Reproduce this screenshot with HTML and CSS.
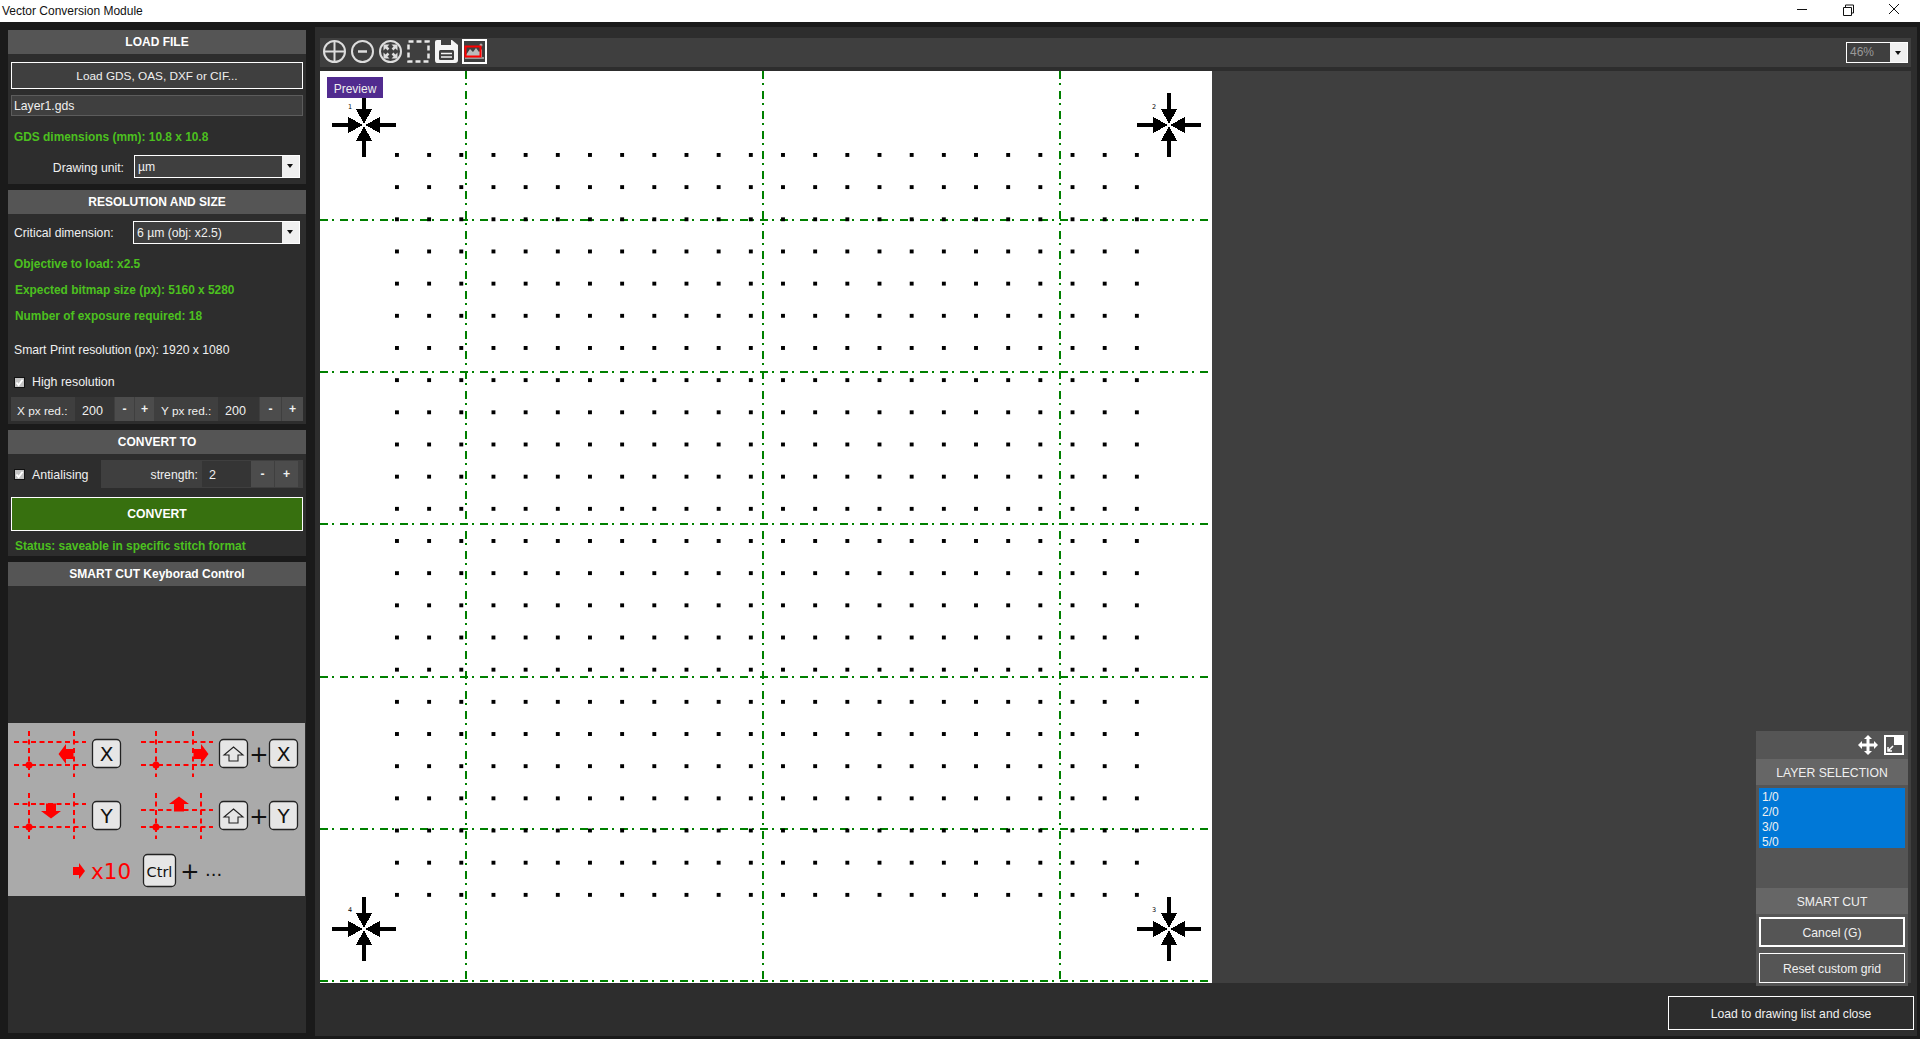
FILE: index.html
```html
<!DOCTYPE html>
<html lang="en">
<head>
    <meta charset="UTF-8">
    <meta name="viewport" content="width=device-width, initial-scale=1.0">
    <title>Vector Conversion Module</title>
    <link rel="stylesheet" href="styles.css">
</head>
<body>
    <svg class="defs" width="0" height="0">
        <defs>
            <symbol id="check" viewBox="0 0 11 11">
                <rect x="0.5" y="0.5" width="10" height="10" fill="#c4c4c4" stroke="#111"/>
                <path d="M2.5 5.5 L4.6 8 L8.6 2.8" fill="none" stroke="#fff" stroke-width="1.8"/>
            </symbol>
            <g id="arrow">
                <path d="M-2 -32 H2 V-16 H8 L0 -1 L-8 -16 H-2 Z" fill="#000"/>
            </g>
            <g id="target" shape-rendering="crispEdges">
                <use href="#arrow"/>
                <use href="#arrow" transform="rotate(90)"/>
                <use href="#arrow" transform="rotate(180)"/>
                <use href="#arrow" transform="rotate(270)"/>
            </g>
            <g id="redarrow">
                <path d="M0 -7.5 L-10 0 H-5 V7.5 H5 V0 H10 Z" fill="#f00"/>
            </g>
            <g id="shiftkey">
                <rect x="0.5" y="0.5" width="28" height="28" rx="4" fill="#e6e6e6" stroke="#222" stroke-width="1.3"/>
                <path d="M14.5 8 L24 16 H19 V22 H10 V16 H5 Z" fill="none" stroke="#222" stroke-width="1.1"/>
            </g>
            <g id="blankkey">
                <rect x="0.5" y="0.5" width="28" height="28" rx="4" fill="#e6e6e6" stroke="#222" stroke-width="1.3"/>
            </g>
        </defs>
    </svg>

    <header class="titlebar">
        <span class="title">Vector Conversion Module</span>
        <div class="winctl">
            <svg width="46" height="22" viewBox="0 0 46 22"><path d="M18 9.5 H28" stroke="#111"/></svg>
            <svg width="46" height="22" viewBox="0 0 46 22"><path d="M18.5 7.5 H26.5 V15.5 H18.5 Z M20.5 7 V5 H28.5 V13 H26.5" fill="none" stroke="#111"/></svg>
            <svg width="46" height="22" viewBox="0 0 46 22"><path d="M18 4 L28 14 M28 4 L18 14" stroke="#111"/></svg>
        </div>
    </header>

    <div class="app">
        <aside class="sidebar">
            <section class="panel">
                <h2 class="panel-head">LOAD FILE</h2>
                <button class="btn load-gds m8">Load GDS, OAS, DXF or CIF...</button>
                <div class="filename m6">Layer1.gds</div>
                <div class="info m10 h22">GDS dimensions (mm): 10.8 x 10.8</div>
                <div class="row unit-row m7">
                    <label class="unit-label">Drawing unit:</label>
                    <div class="select unit-select"><span class="select-val">µm</span><span class="select-btn"></span></div>
                </div>
            </section>

            <section class="panel">
                <h2 class="panel-head">RESOLUTION AND SIZE</h2>
                <div class="row cd-row m7">
                    <label>Critical dimension:</label>
                    <div class="select cd-select"><span class="select-val">6 µm (obj: x2.5)</span><span class="select-btn"></span></div>
                </div>
                <div class="info m10">Objective to load: x2.5</div>
                <div class="info m6 in1">Expected bitmap size (px): 5160 x 5280</div>
                <div class="info m6 in1">Number of exposure required: 18</div>
                <div class="plain m14">Smart Print resolution (px): 1920 x 1080</div>
                <label class="plain checkline m12"><svg class="check"><use href="#check"/></svg>High resolution</label>
                <div class="stepper-row m5">
                    <span class="step-label">X px red.:</span>
                    <span class="step-val xval">200</span>
                    <span class="step-btn">-</span>
                    <span class="step-btn">+</span>
                    <span class="step-label ylabel">Y px red.:</span>
                    <span class="step-val yval">200</span>
                    <span class="step-btn wide">-</span>
                    <span class="step-btn wide">+</span>
                </div>
            </section>

            <section class="panel">
                <h2 class="panel-head">CONVERT TO</h2>
                <div class="row aa-row m6">
                    <label class="plain checkline aa-check"><svg class="check"><use href="#check"/></svg>Antialising</label>
                    <div class="strength">
                        <span class="strength-label">strength:</span>
                        <span class="strength-val">2</span>
                        <span class="step-btn big">-</span>
                        <span class="step-btn big">+</span>
                    </div>
                </div>
                <button class="btn convert m9">CONVERT</button>
                <div class="info m5 in1">Status: saveable in specific stitch format</div>
            </section>

            <section class="panel grow">
                <h2 class="panel-head">SMART CUT Keyborad Control</h2>
                <svg class="keys" width="297" height="173" viewBox="8 723 297 173">
                    <rect x="8" y="723" width="297" height="173" fill="#aaa"/>

                    <g fill="none" stroke="#f00" stroke-width="2" stroke-dasharray="5 3.5">
                        <path d="M14 742 H86 M14 765 H86 M29 731 V777 M74 731 V777"/>
                        <path d="M141 742 H213 M141 765 H213 M156 731 V777 M193 731 V777"/>
                        <path d="M14 804 H86 M14 827 H86 M29 793 V839 M74 793 V839"/>
                        <path d="M141 810 H213 M141 827 H213 M156 793 V839 M201 793 V839"/>
                    </g>
                    <g fill="#f00">
                        <circle cx="29" cy="765" r="3.5"/>
                        <circle cx="156" cy="765" r="3.5"/>
                        <circle cx="29" cy="827" r="3.5"/>
                        <circle cx="156" cy="827" r="3.5"/>
                    </g>
                    <use href="#redarrow" transform="translate(66 754) rotate(-90)"/>
                    <use href="#redarrow" transform="translate(201 754) rotate(90)"/>
                    <use href="#redarrow" transform="translate(51 811) rotate(180)"/>
                    <use href="#redarrow" transform="translate(179 804)"/>

                    <use href="#blankkey" x="92" y="739"/>
                    <use href="#shiftkey" x="219" y="739"/>
                    <use href="#blankkey" x="269" y="739"/>
                    <use href="#blankkey" x="92" y="801"/>
                    <use href="#shiftkey" x="219" y="801"/>
                    <use href="#blankkey" x="269" y="801"/>

                    <g class="keytext">
                        <text x="106.5" y="761">X</text>
                        <text x="283.5" y="761">X</text>
                        <text x="106.5" y="823">Y</text>
                        <text x="283.5" y="823">Y</text>
                    </g>
                    <g class="keytext plus">
                        <text x="259" y="762">+</text>
                        <text x="259" y="824">+</text>
                        <text x="190" y="879">+</text>
                    </g>

                    <use href="#redarrow" transform="translate(79 871) rotate(90) scale(0.8)"/>
                    <text class="x10" x="91" y="879">x10</text>
                    <rect x="143.5" y="854.5" width="32" height="32" rx="4" fill="#e6e6e6" stroke="#222" stroke-width="1.3"/>
                    <text class="ctrl" x="159.5" y="877">Ctrl</text>
                    <text class="dots" x="205" y="876">...</text>
                </svg>
            </section>
        </aside>

        <main class="main">
            <div class="toolbar">
                <svg class="tool" viewBox="0 0 25 25"><g fill="none" stroke="#ddd" stroke-width="2"><circle cx="12.5" cy="12.5" r="10.5"/><path d="M12.5 3 V22 M3 12.5 H22"/></g></svg>
                <svg class="tool" viewBox="0 0 25 25"><g fill="none" stroke="#ddd" stroke-width="2"><circle cx="12.5" cy="12.5" r="10.5"/><path d="M8 12.5 H17" stroke-width="2.5"/></g></svg>
                <svg class="tool" viewBox="0 0 25 25"><circle cx="12.5" cy="12.5" r="10.5" fill="none" stroke="#ddd" stroke-width="2"/><g fill="#ddd"><path d="M5.5 5.5 H11.5 L5.5 11.5 Z"/><path d="M19.5 5.5 V11.5 L13.5 5.5 Z"/><path d="M19.5 19.5 H13.5 L19.5 13.5 Z"/><path d="M5.5 19.5 V13.5 L11.5 19.5 Z"/></g><path d="M7.5 7.5 L10.5 10.5 M17.5 7.5 L14.5 10.5 M17.5 17.5 L14.5 14.5 M7.5 17.5 L10.5 14.5" stroke="#ddd" stroke-width="2.5"/></svg>
                <svg class="tool" viewBox="0 0 25 25"><rect x="2.5" y="2.5" width="20" height="20" fill="none" stroke="#e8e8e8" stroke-width="2.5" stroke-dasharray="5 3"/></svg>
                <svg class="tool" viewBox="0 0 25 25"><path d="M3 1 H18 L24 6 V21 Q24 24 21 24 H3 Q1 24 1 21 V3 Q1 1 3 1 Z" fill="#f4f4f4"/><rect x="7" y="1" width="10" height="5" fill="#3f3f3f"/><rect x="5" y="11" width="15" height="10" rx="1.5" fill="#3f3f3f"/><path d="M7 14.5 H18 M7 18 H18" stroke="#f4f4f4" stroke-width="1.5"/></svg>
                <svg class="tool" viewBox="0 0 25 25"><rect x="1" y="1" width="23" height="23" fill="#3f3f3f" stroke="#fff" stroke-width="2"/><path d="M3 20 H22 V18 H3 Z" fill="#999"/><path d="M4 16 L8 10 L11 13 L14 9 L17 13 L20 10 V18 H4 Z" fill="#bbb"/><circle cx="19" cy="6" r="1.5" fill="#aaa"/><rect x="3.5" y="7.5" width="15" height="10" fill="none" stroke="#f00" stroke-width="2"/></svg>
                <div class="select zoom-select"><span class="select-val zoom-val">46%</span><span class="select-btn"></span></div>
            </div>

            <div class="stage">
                <svg class="canvas" width="892" height="912" viewBox="0 0 892 912">
                    <defs>
                        <pattern id="dots" x="75" y="82" width="32.17" height="32.17" patternUnits="userSpaceOnUse">
                            <rect width="4" height="4" fill="#000" shape-rendering="crispEdges"/>
                        </pattern>
                    </defs>
                    <rect width="892" height="912" fill="#fff"/>
                    <g class="stitch">
                        <path d="M146 0 V910"/>
                        <path d="M443 0 V910"/>
                        <path d="M740 0 V910"/>
                        <path d="M0 149 H892"/>
                        <path d="M0 301 H892"/>
                        <path d="M0 453 H892"/>
                        <path d="M0 606 H892"/>
                        <path d="M0 758 H892"/>
                        <path d="M0 910 H892"/>
                    </g>
                    <rect x="75" y="82" width="772" height="772" fill="url(#dots)"/>
                    <use href="#target" transform="translate(44 54)"/>
                    <use href="#target" transform="translate(849 54)"/>
                    <use href="#target" transform="translate(849 858)"/>
                    <use href="#target" transform="translate(44 858)"/>
                    <g class="marknum">
                        <text x="28" y="38">1</text>
                        <text x="832" y="38">2</text>
                        <text x="832" y="841">3</text>
                        <text x="28" y="841">4</text>
                    </g>
                </svg>
                <div class="preview-tag">Preview</div>

                <div class="layer-box">
                    <div class="layer-top">
                        <svg width="20" height="20" viewBox="0 0 20 20"><path d="M10 0 L14 4 H11.5 V8.5 H16 V6 L20 10 L16 14 V11.5 H11.5 V16 H14 L10 20 L6 16 H8.5 V11.5 H4 V14 L0 10 L4 6 V8.5 H8.5 V4 H6 Z" fill="#fff"/></svg>
                        <svg width="20" height="20" viewBox="0 0 20 20"><rect x="1" y="1" width="18" height="18" fill="none" stroke="#fff" stroke-width="2"/><rect x="10" y="1" width="9" height="9" fill="#fff"/><path d="M9 11 L4 16 M4 12 V16 H8" fill="none" stroke="#fff" stroke-width="1.5"/></svg>
                    </div>
                    <div class="layer-head">LAYER SELECTION</div>
                    <ul class="layer-list">
                        <li>1/0</li>
                        <li>2/0</li>
                        <li>3/0</li>
                        <li>5/0</li>
                    </ul>
                    <div class="layer-head cut-head">SMART CUT</div>
                    <button class="btn box-btn thick">Cancel (G)</button>
                    <button class="btn box-btn thin">Reset custom grid</button>
                </div>
            </div>

            <div class="bottom">
                <button class="btn load-btn">Load to drawing list and close</button>
            </div>
        </main>
    </div>
</body>
</html>
```

FILE: styles.css
```css
* {
    box-sizing: border-box;
}
html, body {
    margin: 0;
    padding: 0;
    height: 100%;
    overflow: hidden;
}
body {
    display: flex;
    flex-direction: column;
    background-color: #1a1a1a;
    color: #f0f0f0;
    font-family: "Liberation Sans", Arial, sans-serif;
    font-size: 12.2px;
}
.defs {
    position: absolute;
}

/* title bar */
.titlebar {
    height: 22px;
    background-color: #fff;
    color: #111;
    display: flex;
    justify-content: space-between;
    flex-shrink: 0;
}
.title {
    font-size: 12px;
    line-height: 22px;
    padding-left: 2px;
}
.winctl {
    display: flex;
    margin-right: 3px;
}
.winctl svg {
    display: block;
}

/* layout */
.app {
    flex: 1;
    display: flex;
    gap: 9px;
    padding: 5px 3px 3px 8px;
    min-height: 0;
}
.sidebar {
    width: 298px;
    flex-shrink: 0;
    display: flex;
    flex-direction: column;
    gap: 6px;
    margin: 3px 0;
}
.panel {
    background-color: #2d2d2d;
    display: flex;
    flex-direction: column;
}
.panel:first-child {
    padding-bottom: 6px;
}
.panel:nth-child(2) {
    padding-bottom: 3px;
}
.grow {
    flex: 1;
}
.panel-head {
    margin: 0;
    height: 24px;
    line-height: 25px;
    background-color: #555;
    color: #fff;
    font-size: 12px;
    font-weight: bold;
    text-align: center;
}

/* vertical spacing */
.m5 { margin-top: 5px; }
.m6 { margin-top: 6px; }
.m7 { margin-top: 7px; }
.m8 { margin-top: 8px; }
.m9 { margin-top: 9px; }
.m10 { margin-top: 10px; }
.m12 { margin-top: 12px; }
.m14 { margin-top: 14px; }

.btn {
    display: block;
    background-color: #3f3f3f;
    border: 1px solid #fff;
    color: #f0f0f0;
    font-family: inherit;
    font-size: 12.2px;
    padding: 0;
    text-align: center;
}
.panel > .btn {
    margin-left: 3px;
    width: 292px;
    height: 27px;
}
.panel > .load-gds {
    font-size: 11.8px;
}
.panel > .convert {
    height: 34px;
    background-color: #37700f;
    font-weight: bold;
    color: #fff;
}
.filename {
    margin-left: 3px;
    width: 292px;
    height: 21px;
    line-height: 20px;
    padding-left: 2px;
    background-color: #3f3f3f;
    border: 1px solid #5c5c5c;
}
.info {
    height: 20px;
    line-height: 20px;
    padding-left: 6px;
    color: #4cc01f;
    font-weight: bold;
    font-size: 11.9px;
}
.h22 {
    height: 22px;
    line-height: 22px;
}
.in1 {
    padding-left: 7px;
}
.plain {
    height: 20px;
    line-height: 20px;
    padding-left: 6px;
}
.row {
    display: flex;
    align-items: center;
}
.unit-row {
    height: 23px;
}
.unit-label {
    width: 116px;
    text-align: right;
    padding-top: 3px;
}
.unit-select {
    margin-left: 10px;
    width: 166px;
}
.cd-row {
    height: 23px;
    padding-left: 6px;
}
.cd-row label {
    width: 119px;
}
.cd-select {
    width: 167px;
}

/* dropdowns */
.select {
    display: flex;
    height: 23px;
    border: 1px solid #fff;
    background-color: #3f3f3f;
}
.select-val {
    flex: 1;
    line-height: 23px;
    padding-left: 3px;
}
.select-btn {
    width: 17px;
    background-color: #f0f0f0;
    position: relative;
}
.select-btn::after {
    content: "";
    position: absolute;
    left: 5px;
    top: 8px;
    border-top: 4px solid #111;
    border-left: 3.5px solid transparent;
    border-right: 3.5px solid transparent;
}
.zoom-select {
    margin-left: auto;
    margin-right: 3px;
    margin-top: 1px;
    width: 62px;
    height: 21px;
}
.zoom-val {
    color: #9a9a9a;
    line-height: 19px;
    font-size: 12px;
}

/* checkboxes */
.checkline {
    display: flex;
    align-items: center;
    font-size: 12.4px;
}
.check {
    width: 11px;
    height: 11px;
    margin-right: 7px;
    flex-shrink: 0;
}

/* number steppers */
.stepper-row {
    margin-left: 3px;
    width: 292px;
    height: 24px;
    display: flex;
    background-color: #3f3f3f;
    line-height: 28px;
}
.step-label {
    width: 64px;
    padding-left: 6px;
    font-size: 11.8px;
}
.ylabel {
    padding-left: 7px;
}
.step-val {
    background-color: #353535;
    padding-left: 7px;
    font-size: 12.5px;
}
.xval {
    width: 39px;
}
.yval {
    width: 41px;
}
.step-btn {
    width: 19px;
    margin-left: 1px;
    background-color: #4c4c4c;
    text-align: center;
    font-weight: bold;
    line-height: 24px;
}
.step-btn.wide {
    width: 21px;
}
.aa-row {
    height: 28px;
}
.aa-check {
    width: 93px;
    padding-top: 1px;
}
.strength {
    width: 202px;
    height: 28px;
    display: flex;
    align-items: stretch;
    background-color: #3f3f3f;
    line-height: 28px;
    padding: 1px 3px 1px 0;
}
.strength-label {
    width: 97px;
    text-align: right;
}
.strength-val {
    width: 49px;
    margin-left: 4px;
    background-color: #353535;
    padding-left: 7px;
    font-size: 12.5px;
}
.step-btn.big {
    width: 24px;
    margin-left: 0;
    border-right: 1px solid #3f3f3f;
    line-height: 26px;
}

/* keyboard help picture */
.keys {
    display: block;
    margin-top: 137px;
}
.keytext text {
    font-family: "DejaVu Sans", sans-serif;
    font-size: 20px;
    fill: #111;
    text-anchor: middle;
}
.keytext.plus text {
    font-size: 23px;
}
.x10 {
    font-family: "DejaVu Sans", sans-serif;
    font-size: 21.5px;
    fill: #f00;
}
.ctrl {
    font-family: "DejaVu Sans", sans-serif;
    font-size: 14.5px;
    fill: #111;
    text-anchor: middle;
}
.dots {
    font-family: "DejaVu Sans", sans-serif;
    font-size: 18px;
    fill: #111;
}

/* right side */
.main {
    flex: 1;
    min-width: 0;
    display: flex;
    flex-direction: column;
    background-color: #2d2d2d;
    padding: 11px 4px 0 5px;
}
.toolbar {
    height: 29px;
    margin-right: 2px;
    background-color: #3f3f3f;
    display: flex;
    align-items: center;
    gap: 3px;
    padding-left: 2px;
    padding-bottom: 2px;
    flex-shrink: 0;
}
.tool {
    width: 25px;
    height: 25px;
    flex-shrink: 0;
}
.stage {
    position: relative;
    height: 912px;
    margin-top: 4px;
    margin-right: 2px;
    background-color: #3f3f3f;
    flex-shrink: 0;
}
.canvas {
    display: block;
}
.stitch path {
    fill: none;
    stroke: #008000;
    stroke-width: 2;
    stroke-dasharray: 8 4 2 6;
}
.marknum text {
    font-family: "DejaVu Sans", sans-serif;
    font-size: 6.5px;
    fill: #000;
}
.preview-tag {
    position: absolute;
    left: 7px;
    top: 6px;
    width: 56px;
    height: 21px;
    line-height: 24px;
    text-align: center;
    background-color: #512b8f;
    color: #eee;
    font-size: 12px;
}
.layer-box {
    position: absolute;
    right: 3px;
    bottom: -3px;
    width: 152px;
    height: 255px;
    background-color: #555;
    display: flex;
    flex-direction: column;
    align-items: center;
}
.layer-top {
    height: 28px;
    width: 100%;
    display: flex;
    justify-content: flex-end;
    align-items: center;
    gap: 6px;
    padding-right: 4px;
}
.layer-head {
    width: 100%;
    height: 26px;
    line-height: 29px;
    background-color: #666;
    text-align: center;
}
.layer-list {
    list-style: none;
    margin: 3px 0 0;
    padding: 2px 0 0 3px;
    width: 146px;
    height: 60px;
    background-color: #0078d7;
    line-height: 15px;
    font-size: 12px;
}
.cut-head {
    margin-top: 40px;
}
.box-btn {
    width: 146px;
    height: 30px;
    background-color: #555;
    flex-shrink: 0;
    padding-top: 2px;
}
.thick {
    margin-top: 3px;
    border-width: 2px;
}
.thin {
    margin-top: 6px;
    border-width: 1px;
}
.bottom {
    display: flex;
    justify-content: flex-end;
    padding-top: 13px;
    margin-right: -1px;
}
.load-btn {
    width: 246px;
    height: 34px;
    background-color: #2d2d2d;
    padding-top: 1px;
}
```
